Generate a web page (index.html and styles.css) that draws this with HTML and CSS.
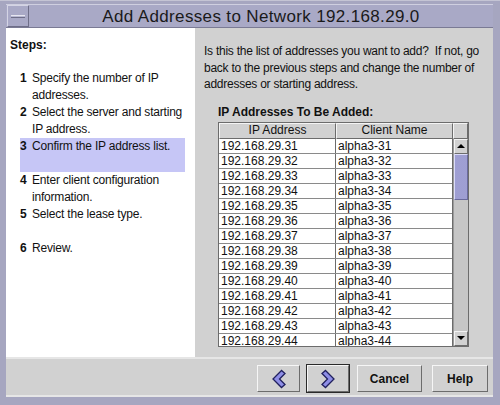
FILE: index.html
```html
<!DOCTYPE html>
<html>
<head>
<meta charset="utf-8">
<link rel="stylesheet" href="styles.css">
</head>
<body>
<div class="window">
  <div class="titlebar">
    <div class="menu-btn"><span class="dash"></span></div>
    <div class="title">Add Addresses to Network 192.168.29.0</div>
  </div>
  <div class="content">
    <div class="steps">
      <div class="steps-head">Steps:</div>
      <ol class="step-list">
        <li class="step"><span class="num">1</span><span class="txt">Specify the number of IP<br>addresses.</span></li>
        <li class="step"><span class="num">2</span><span class="txt">Select the server and starting<br>IP address.</span></li>
        <li class="step current"><span class="num">3</span><span class="txt">Confirm the IP address list.</span></li>
        <li class="step"><span class="num">4</span><span class="txt">Enter client configuration<br>information.</span></li>
        <li class="step"><span class="num">5</span><span class="txt">Select the lease type.</span></li>
        <li class="step"><span class="num">6</span><span class="txt">Review.</span></li>
      </ol>
    </div>
    <div class="main">
      <p class="intro">Is this the list of addresses you want to add?&nbsp; If not, go<br>back to the previous steps and change the number of<br>addresses or starting address.</p>
      <div class="table-label">IP Addresses To Be Added:</div>
      <div class="table">
        <div class="thead">
          <div class="th c1">IP Address</div>
          <div class="th c2">Client Name</div>
          <div class="th corner"></div>
        </div>
        <div class="tbody">
          <div class="rows">
            <div class="row"><div class="td c1">192.168.29.31</div><div class="td c2">alpha3-31</div></div>
            <div class="row"><div class="td c1">192.168.29.32</div><div class="td c2">alpha3-32</div></div>
            <div class="row"><div class="td c1">192.168.29.33</div><div class="td c2">alpha3-33</div></div>
            <div class="row"><div class="td c1">192.168.29.34</div><div class="td c2">alpha3-34</div></div>
            <div class="row"><div class="td c1">192.168.29.35</div><div class="td c2">alpha3-35</div></div>
            <div class="row"><div class="td c1">192.168.29.36</div><div class="td c2">alpha3-36</div></div>
            <div class="row"><div class="td c1">192.168.29.37</div><div class="td c2">alpha3-37</div></div>
            <div class="row"><div class="td c1">192.168.29.38</div><div class="td c2">alpha3-38</div></div>
            <div class="row"><div class="td c1">192.168.29.39</div><div class="td c2">alpha3-39</div></div>
            <div class="row"><div class="td c1">192.168.29.40</div><div class="td c2">alpha3-40</div></div>
            <div class="row"><div class="td c1">192.168.29.41</div><div class="td c2">alpha3-41</div></div>
            <div class="row"><div class="td c1">192.168.29.42</div><div class="td c2">alpha3-42</div></div>
            <div class="row"><div class="td c1">192.168.29.43</div><div class="td c2">alpha3-43</div></div>
            <div class="row"><div class="td c1">192.168.29.44</div><div class="td c2">alpha3-44</div></div>
          </div>
          <div class="scrollbar">
            <div class="sb-btn"><span class="tri up"></span></div>
            <div class="thumb"></div>
            <div class="track"></div>
            <div class="sb-btn"><span class="tri down"></span></div>
          </div>
        </div>
      </div>
    </div>
  </div>
  <div class="buttonbar">
    <button class="btn nav">
      <svg width="16" height="20" viewBox="0 0 16 20"><path d="M10.5 1.5 L2 10 L10.5 18.5 L14 15.5 L8.5 10 L14 4.5 Z" fill="#8e8ee6" stroke="#20205e" stroke-width="1.3" stroke-linejoin="miter"/></svg>
    </button>
    <button class="btn nav default">
      <svg width="16" height="20" viewBox="0 0 16 20"><path d="M5.5 1.5 L14 10 L5.5 18.5 L2 15.5 L7.5 10 L2 4.5 Z" fill="#8e8ee6" stroke="#20205e" stroke-width="1.3" stroke-linejoin="miter"/></svg>
    </button>
    <button class="btn text cancel">Cancel</button>
    <button class="btn text help">Help</button>
  </div>
</div>
</body>
</html>
```
FILE: styles.css
```css
* { box-sizing: border-box; }
html, body { margin: 0; padding: 0; }
body {
  width: 500px;
  height: 405px;
  overflow: hidden;
  background: #a6a6c0;
  font-family: "Liberation Sans", Arial, sans-serif;
  font-size: 12px;
  color: #111;
}
.window {
  width: 500px;
  height: 405px;
  padding: 4px 7px 8px 6px;
  border-top: 1px solid #c4c4d4;
  display: flex;
  flex-direction: column;
}
.titlebar {
  height: 24px;
  display: flex;
  align-items: center;
  background: #a9a9c6;
  border-top: 1px solid #cfcfe0;
  border-bottom: 1px solid #7a7a94;
  margin-top: -1px;
}
.menu-btn {
  width: 22px;
  height: 22px;
  margin-left: 1px;
  border-left: 1px solid #d4d4e4;
  border-top: 1px solid #d4d4e4;
  border-right: 1px solid #6e6e88;
  border-bottom: 1px solid #6e6e88;
  display: flex;
  align-items: center;
  justify-content: center;
}
.dash {
  width: 14px;
  height: 3px;
  background: #b8b8d2;
  border-top: 1px solid #e6e6f0;
  border-bottom: 1px solid #6e6e88;
}
.title {
  flex: 1;
  text-align: center;
  font-size: 17px;
  letter-spacing: 0.35px;
  color: #1a1a1a;
  padding-top: 1px;
}
.content {
  height: 329px;
  display: flex;
}
.steps {
  width: 189px;
  background: #fff;
  padding: 9px 0 0 4px;
}
.steps-head {
  font-weight: bold;
  line-height: 17px;
}
.step-list {
  list-style: none;
  margin: 16px 0 0 10px;
  padding: 0;
  width: 165px;
}
.step {
  height: 34px;
  display: flex;
  line-height: 17px;
}
.step.current { background: #c6c6f6; }
.num {
  width: 12px;
  flex: none;
  font-weight: bold;
}
.txt { flex: 1; letter-spacing: -0.2px; white-space: nowrap; }
.main {
  flex: 1;
  background: #d1d1d1;
  padding: 15px 0 0 9px;
}
.intro {
  margin: 0;
  line-height: 16.5px;
  letter-spacing: -0.25px;
}
.table-label {
  font-weight: bold;
  margin: 11px 0 0 14px;
  line-height: 16px;
}
.table {
  margin: 2px 0 0 14px;
  width: 251px;
  height: 225px;
  border: 1px solid #6c6c6c;
  display: flex;
  flex-direction: column;
  background: #d1d1d1;
}
.thead {
  height: 16px;
  display: flex;
  flex: none;
}
.th {
  height: 16px;
  background: #d1d1d1;
  border-top: 1px solid #f4f4f4;
  border-left: 1px solid #f4f4f4;
  border-right: 1px solid #6c6c6c;
  border-bottom: 1px solid #6c6c6c;
  text-align: center;
  line-height: 13px;
  font-size: 12px;
}
.th.c1 { width: 117px; }
.th.c2 { width: 117px; }
.th.corner { width: 15px; }
.tbody {
  flex: 1;
  display: flex;
  min-height: 0;
}
.rows {
  width: 234px;
  overflow: hidden;
  background: #fff;
  border-right: 1px solid #6c6c6c;
}
.row {
  height: 15px;
  flex: none;
  display: flex;
  border-bottom: 1px solid #8a8a8a;
}
.td {
  line-height: 13px;
  padding: 1px 0 0 2px;
  white-space: nowrap;
}
.td.c1 { width: 117px; border-right: 1px solid #6c6c6c; }
.td.c2 { flex: 1; }
.scrollbar {
  width: 15px;
  display: flex;
  flex-direction: column;
  background: #c6c6c6;
  border-left: 1px solid #9a9a9a;
}
.sb-btn {
  height: 15px;
  flex: none;
  background: #d1d1d1;
  border-top: 1px solid #f4f4f4;
  border-left: 1px solid #f4f4f4;
  border-right: 1px solid #6c6c6c;
  border-bottom: 1px solid #6c6c6c;
  display: flex;
  align-items: center;
  justify-content: center;
}
.tri {
  width: 0;
  height: 0;
  border-left: 4px solid transparent;
  border-right: 4px solid transparent;
}
.tri.up { border-bottom: 4px solid #000; }
.tri.down { border-top: 4px solid #000; }
.thumb {
  height: 46px;
  flex: none;
  background-color: #b8b8e6;
  background-image: radial-gradient(#9090c8 0.6px, transparent 0.9px);
  background-size: 2px 2px;
  border-top: 1px solid #dcdcf8;
  border-left: 1px solid #dcdcf8;
  border-right: 1px solid #6a6a9c;
  border-bottom: 1px solid #6a6a9c;
}
.track { flex: 1; }
.buttonbar {
  height: 40px;
  background: #d1d1d1;
  border-top: 2px solid #e6e6e6;
  border-bottom: 2px solid #e6e6e6;
  display: flex;
  align-items: flex-start;
  justify-content: flex-end;
  padding: 6px 5px 0 0;
}
.btn {
  height: 27px;
  background: #d1d1d1;
  border-top: 1px solid #f6f6f6;
  border-left: 1px solid #f6f6f6;
  border-right: 1px solid #6c6c6c;
  border-bottom: 1px solid #6c6c6c;
  font-family: "Liberation Sans", Arial, sans-serif;
  font-size: 12px;
  font-weight: bold;
  color: #111;
  padding: 0;
  margin: 0;
  display: flex;
  align-items: center;
  justify-content: center;
}
.btn.nav { width: 43px; margin-right: 7px; }
.btn.nav.default {
  width: 42px;
  outline: 1px solid #2a2a2a;
  margin-right: 8px;
}
.btn.cancel { width: 65px; margin-right: 10px; }
.btn.help { width: 56px; }
```
